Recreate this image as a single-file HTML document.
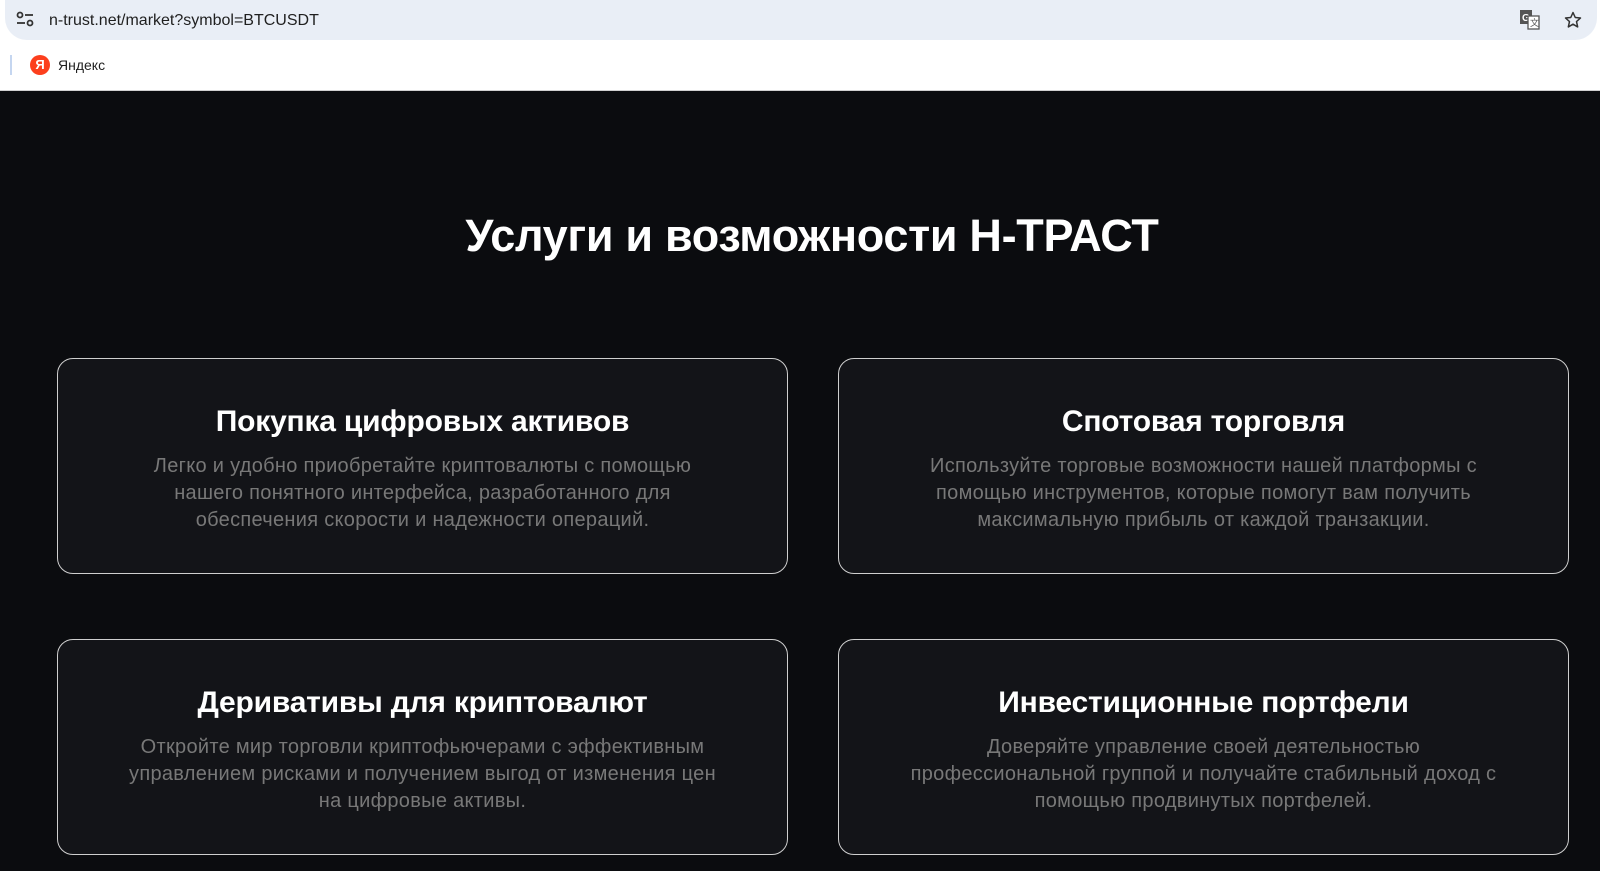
<!DOCTYPE html>
<html><head><meta charset="utf-8"><style>
*{margin:0;padding:0;box-sizing:border-box}
body{width:1600px;height:871px;overflow:hidden;background:#0b0c0f;font-family:"Liberation Sans",sans-serif}
.top{position:absolute;left:0;top:0;width:1600px;height:91px;background:#fff;border-bottom:1px solid #d0d0d0}
.addr{position:absolute;left:5px;top:0;width:1592px;height:40px;background:#e9eef6;border-radius:0 0 22px 22px}
.url{position:absolute;left:44px;top:12px;font-size:16px;color:#1f1f1f}
.bm{position:absolute;left:30px;top:55px;font-size:14px;color:#1f1f1f;display:flex;align-items:center;gap:8px}
.ya{width:20px;height:20px;border-radius:50%;background:#fc3f1d;color:#fff;font-size:13px;font-weight:bold;text-align:center;line-height:20px}
.sep{position:absolute;left:10px;top:55px;width:2px;height:20px;background:#c5d6f0}
h1{position:absolute;top:210px;left:0;width:1624px;text-align:center;color:#fff;font-size:45px;font-weight:bold;letter-spacing:-0.3px}
.card{position:absolute;width:731px;height:216px;background:#131418;border:1.5px solid #cfcfcf;border-radius:16px;text-align:center;padding-top:45px}
.card h2{color:#fff;font-size:30px;font-weight:bold;letter-spacing:-0.2px;margin-bottom:13px;line-height:36px}
.card p{color:#787878;font-size:20px;line-height:27px;letter-spacing:0.3px;white-space:nowrap}
</style></head><body>
<div class="top">
<div class="addr">
<svg style="position:absolute;left:10px;top:11px" width="20" height="16" viewBox="0 0 20 16"><circle cx="5" cy="4" r="2.5" fill="none" stroke="#333" stroke-width="1.8"/><line x1="10" y1="4" x2="18" y2="4" stroke="#333" stroke-width="1.8"/><line x1="2" y1="12" x2="10" y2="12" stroke="#333" stroke-width="1.8"/><circle cx="15" cy="12" r="2.5" fill="none" stroke="#333" stroke-width="1.8"/></svg>
<div class="url">n-trust.net/market?symbol=BTCUSDT</div>
<svg style="position:absolute;left:1514px;top:9px" width="22" height="22" viewBox="0 0 22 22"><rect x="1" y="1" width="12" height="14" fill="#555"/><text x="3" y="12" font-size="10" fill="#fff" font-family="Liberation Sans" font-weight="bold">G</text><rect x="9" y="7" width="11" height="13" fill="#fff" stroke="#555" stroke-width="1.3"/><text x="11" y="17" font-size="9" fill="#555" font-family="Liberation Sans">文</text></svg>
<svg style="position:absolute;left:1558px;top:10px" width="20" height="20" viewBox="0 0 24 24"><path d="M12 3l2.7 6 6.3.6-4.8 4.3 1.4 6.4L12 17l-5.6 3.3 1.4-6.4L3 9.6 9.3 9z" fill="none" stroke="#333" stroke-width="1.8" stroke-linejoin="round"/></svg>
</div>
<div class="sep"></div>
<div class="bm"><div class="ya">Я</div>Яндекс</div>
</div>
<h1>Услуги и возможности Н-ТРАСТ</h1>
<div class="card" style="left:57px;top:358px"><h2>Покупка цифровых активов</h2><p>Легко и удобно приобретайте криптовалюты с помощью<br>нашего понятного интерфейса, разработанного для<br>обеспечения скорости и надежности операций.</p></div>
<div class="card" style="left:838px;top:358px"><h2>Спотовая торговля</h2><p>Используйте торговые возможности нашей платформы с<br>помощью инструментов, которые помогут вам получить<br>максимальную прибыль от каждой транзакции.</p></div>
<div class="card" style="left:57px;top:639px"><h2>Деривативы для криптовалют</h2><p>Откройте мир торговли криптофьючерами с эффективным<br>управлением рисками и получением выгод от изменения цен<br>на цифровые активы.</p></div>
<div class="card" style="left:838px;top:639px"><h2>Инвестиционные портфели</h2><p>Доверяйте управление своей деятельностью<br>профессиональной группой и получайте стабильный доход с<br>помощью продвинутых портфелей.</p></div>
</body></html>
